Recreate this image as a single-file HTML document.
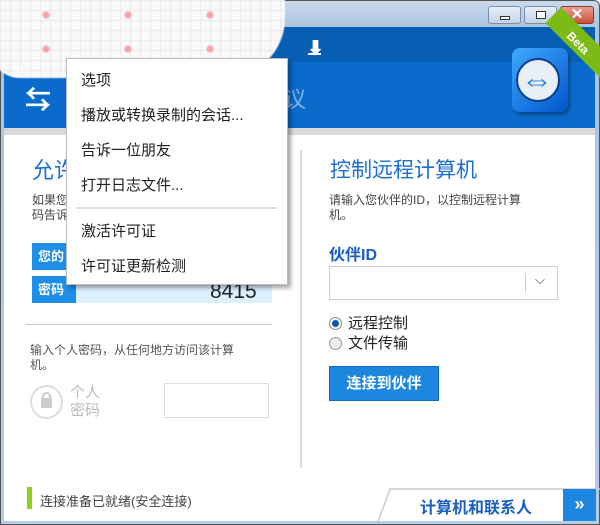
<!DOCTYPE html>
<html><head><meta charset="utf-8"><style>
*{margin:0;padding:0;box-sizing:border-box}
body{width:600px;height:525px;overflow:hidden;background:#fff;font-family:"Liberation Sans","Noto Sans CJK SC",sans-serif;position:relative;color:#333}
.a{position:absolute}
.t{white-space:nowrap}
</style></head><body>
<!-- frame -->
<div class="a" style="left:0;top:0;width:600px;height:525px;background:linear-gradient(#c9d9ec,#a9c3e0 27px,#b7cde6);border:1px solid #555;border-radius:6px 6px 0 0"></div>
<div class="a" style="left:4px;top:27px;width:591px;height:494px;background:#fff"></div>
<!-- title buttons -->
<div class="a" style="left:488px;top:6px;width:33px;height:18px;border:1px solid #7a8ea8;border-radius:3px;background:linear-gradient(#e8eef6,#c3d2e4)"><div class="a" style="left:11px;top:9px;width:10px;height:4px;border:1px solid #333;background:#fff"></div></div>
<div class="a" style="left:524px;top:6px;width:33px;height:18px;border:1px solid #7a8ea8;border-radius:3px;background:linear-gradient(#e8eef6,#c3d2e4)"><div class="a" style="left:11px;top:4px;width:10px;height:8px;border:1px solid #333;background:#fff"></div></div>
<div class="a t" style="left:560px;top:6px;width:34px;height:18px;border:1px solid #8b3a2c;border-radius:3px;background:linear-gradient(#e9a08f,#c8503a);color:#fff;font-weight:bold;font-size:15px;line-height:16px;text-align:center">✕</div>
<!-- toolbar -->
<div class="a" style="left:4px;top:27px;width:591px;height:35px;background:#075fb4"></div>
<div class="a" style="left:4px;top:62px;width:591px;height:66px;background:#0a6bcc"></div>
<div class="a" style="left:4px;top:128px;width:591px;height:7px;background:#d9d9d9"></div>
<div class="a t" style="left:258px;top:37px;color:#fff;font-size:15px">馈</div>
<div class="a t" style="left:307px;top:34px;color:#fff;font-size:17px;font-weight:bold">⬇</div>
<div class="a" style="left:308px;top:53px;width:13px;height:2px;background:#fff"></div>
<div class="a t" style="left:284px;top:82px;color:#7fb1e6;font-size:22px">议</div>
<div class="a t" style="left:25px;top:80px;color:#fff;font-size:26px;font-weight:bold">⇆</div>
<!-- logo -->
<div class="a" style="left:512px;top:48px;width:56px;height:64px;border-radius:8px;background:linear-gradient(135deg,#3fa9ff,#0055cc);box-shadow:2px 3px 3px rgba(0,0,0,.3)"></div>
<div class="a" style="left:516px;top:58px;width:44px;height:44px;border-radius:50%;background:#e8eef5;border:2px solid #0b3f8a"></div>
<div class="a t" style="left:521px;top:62px;color:#1a7be0;font-size:32px;font-weight:bold">⇔</div>
<div class="a" style="left:540px;top:36px;width:90px;height:22px;background:#7cbb16;transform:rotate(45deg);transform-origin:center"></div>
<div class="a t" style="left:565px;top:36px;color:#fff;font-size:12px;font-weight:bold;transform:rotate(45deg)">Beta</div>
<!-- strawberry blob -->
<div class="a" style="left:-10px;top:-10px;width:295px;height:88px;background-color:#fafafa;background-image:radial-gradient(circle,#f4a3a8 3px,transparent 4px),linear-gradient(#e6e6e6 1px,transparent 1px),linear-gradient(90deg,#e6e6e6 1px,transparent 1px);background-size:82px 34px,10px 10px,10px 10px;background-position:15px 8px,0 0,0 0;border-radius:0 0 60px 30px;filter:blur(.5px)"></div>
<div class="a t" style="left:12px;top:63px;color:#fff;font-size:12px">免</div>
<!-- left panel -->
<div class="a t" style="left:32px;top:153px;color:#1a6fd1;font-size:22px">允许</div>
<div class="a t" style="left:32px;top:193px;font-size:12px;line-height:15px;color:#444">如果您<br>码告诉</div>
<div class="a" style="left:32px;top:243px;width:240px;height:27px;background:#fff"></div>
<div class="a t" style="left:32px;top:243px;width:48px;height:27px;background:#1e8ee6;color:#fff;font-weight:bold;font-size:13px;line-height:27px;padding-left:6px">您的</div>
<div class="a" style="left:32px;top:276px;width:240px;height:27px;background:#dcf0fd"></div>
<div class="a t" style="left:32px;top:276px;width:44px;height:27px;background:#1e8ee6;color:#fff;font-weight:bold;font-size:13px;line-height:27px;padding-left:6px">密码</div>
<div class="a t" style="left:210px;top:280px;font-size:21px;color:#222">8415</div>
<div class="a" style="left:26px;top:324px;width:246px;height:1px;background:#ccc"></div>
<div class="a t" style="left:30px;top:343px;font-size:12px;line-height:15px;color:#555">输入个人密码，从任何地方访问该计算<br>机。</div>
<div class="a" style="left:30px;top:385px;width:33px;height:34px;border-radius:50%;border:2px solid #ddd"></div>
<div class="a" style="left:41px;top:398px;width:11px;height:10px;background:#ccc;border-radius:1px"></div>
<div class="a" style="left:42px;top:392px;width:9px;height:9px;border:2px solid #ccc;border-radius:5px 5px 0 0"></div>
<div class="a t" style="left:70px;top:384px;font-size:15px;line-height:18px;color:#bbb">个人<br>密码</div>
<div class="a" style="left:164px;top:383px;width:105px;height:35px;border:1px solid #ddd"></div>
<div class="a" style="left:300px;top:150px;width:2px;height:318px;background:#ddd"></div>
<!-- right -->
<div class="a t" style="left:330px;top:154px;color:#1a6fd1;font-size:21px">控制远程计算机</div>
<div class="a t" style="left:329px;top:193px;font-size:12px;line-height:15px;color:#444">请输入您伙伴的ID，以控制远程计算<br>机。</div>
<div class="a t" style="left:329px;top:241px;color:#1a5fc0;font-size:16px;font-weight:bold">伙伴ID</div>
<div class="a" style="left:329px;top:266px;width:229px;height:34px;border:1px solid #d0d0d0"></div>
<div class="a" style="left:525px;top:273px;width:1px;height:20px;background:#ccc"></div>
<div class="a t" style="left:535px;top:272px;font-size:13px;color:#333">⌵</div>
<div class="a" style="left:329px;top:317px;width:13px;height:13px;border-radius:50%;border:1px solid #888;background:radial-gradient(circle,#0a56b0 3px,#fff 4px)"></div>
<div class="a" style="left:329px;top:337px;width:13px;height:13px;border-radius:50%;border:1px solid #999;background:#eee"></div>
<div class="a t" style="left:348px;top:314px;font-size:15px;line-height:20px;color:#222">远程控制<br>文件传输</div>
<div class="a t" style="left:329px;top:366px;width:110px;height:35px;background:#1d87e0;border:1px solid #0e6cc0;color:#fff;font-weight:bold;font-size:15px;line-height:33px;text-align:center">连接到伙伴</div>
<!-- bottom -->
<div class="a" style="left:27px;top:487px;width:5px;height:22px;background:#8fd11b"></div>
<div class="a t" style="left:40px;top:491px;font-size:13px;color:#444">连接准备已就绪(安全连接)</div>
<svg class="a" style="left:370px;top:488px" width="230" height="35"><path d="M8 34 L20 1 L230 1" fill="none" stroke="#ccc" stroke-width="1.5"/></svg>
<div class="a t" style="left:420px;top:494px;color:#1a5fc0;font-size:16px;font-weight:bold">计算机和联系人</div>
<div class="a t" style="left:563px;top:489px;width:33px;height:32px;background:#1d87e0;color:#fff;font-size:18px;font-weight:bold;line-height:30px;text-align:center">»</div>
<!-- menu -->
<div class="a" style="left:66px;top:58px;width:222px;height:227px;background:#fff;border:1px solid #bbb;box-shadow:3px 3px 4px rgba(0,0,0,.35)"></div>
<div class="a t" style="left:81px;top:63px;font-size:15px;line-height:35px;color:#222">选项<br>播放或转换录制的会话...<br>告诉一位朋友<br>打开日志文件...</div>
<div class="a" style="left:77px;top:207px;width:200px;height:2px;background:#ddd"></div>
<div class="a t" style="left:81px;top:214px;font-size:15px;line-height:35px;color:#222">激活许可证<br>许可证更新检测</div>
</body></html>
